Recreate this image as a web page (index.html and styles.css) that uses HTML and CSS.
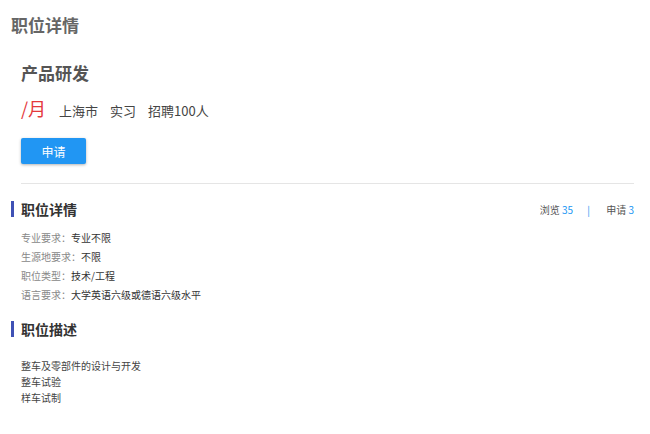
FILE: index.html
```html
<!DOCTYPE html>
<html lang="zh-CN">
<head>
    <meta charset="UTF-8">
    <title>职位详情</title>
    <link rel="stylesheet" href="styles.css">
</head>
<body>

<h1 class="page-title">职位详情</h1>

<div class="job-head">
    <h2 class="job-name">产品研发</h2>
    <div class="job-meta">
        <span class="salary">/月</span>
        <span>上海市</span>
        <span>实习</span>
        <span>招聘100人</span>
    </div>
    <button class="apply-btn">申请</button>
</div>

<div class="section">
    <div class="section-head">
        <h3 class="section-title">职位详情</h3>
        <div class="stats">
            浏览 <span class="num">35</span>
            <span class="sep">|</span>
            申请 <span class="num">3</span>
        </div>
    </div>
    <ul class="info-list">
        <li><span class="label">专业要求：</span>专业不限</li>
        <li><span class="label">生源地要求：</span>不限</li>
        <li><span class="label">职位类型：</span>技术/工程</li>
        <li><span class="label">语言要求：</span>大学英语六级或德语六级水平</li>
    </ul>
</div>

<div class="section">
    <div class="section-head">
        <h3 class="section-title">职位描述</h3>
    </div>
    <div class="desc">
        整车及零部件的设计与开发<br>
        整车试验<br>
        样车试制
    </div>
</div>

</body>
</html>
```

FILE: styles.css
```css
body, html {
    margin: 0;
    background-color: #fff;
    font-family: "Noto Sans CJK SC", "Microsoft YaHei", sans-serif;
    color: #333;
}

body {
    padding: 0 16px 0 11px;
}

.page-title {
    margin: 0;
    padding-top: 12px;
    font-size: 17px;
    line-height: 26px;
    color: #666;
    font-weight: bold;
}

.job-head {
    margin: 0 0 0 10px;
    padding: 23px 0 19px;
    border-bottom: 1px solid #e5e5e5;
}

.job-name {
    margin: 0;
    font-size: 17px;
    line-height: 24px;
    color: #555;
    font-weight: bold;
}

.job-meta {
    display: flex;
    align-items: baseline;
    gap: 12px;
    margin-top: 11px;
    font-size: 13px;
    line-height: 24px;
    color: #444;
}

.salary {
    font-size: 18px;
    color: #e4393c;
    margin-right: 1px;
}

.apply-btn {
    margin-top: 15px;
    width: 65px;
    height: 26px;
    border: none;
    border-radius: 2px;
    background-color: #2196f3;
    color: #fff;
    font-family: inherit;
    font-size: 12px;
    box-shadow: 0 1px 3px rgba(0, 0, 0, 0.3);
    cursor: pointer;
}

.section {
    margin-top: 17px;
}

.section-head {
    display: flex;
    align-items: center;
    justify-content: space-between;
}

.section-title {
    margin: 0;
    padding-left: 7px;
    border-left: 3px solid #3f51b5;
    font-size: 14px;
    line-height: 16px;
    font-weight: bold;
    color: #333;
}

.stats {
    font-size: 10px;
    color: #555;
}

.stats .num {
    color: #2196f3;
}

.stats .sep {
    color: #2196f3;
    margin: 0 14px 0 12px;
}

.info-list {
    list-style: none;
    margin: 11px 0 0 10px;
    padding: 0;
    font-size: 10px;
    line-height: 19px;
    color: #333;
}

.label {
    color: #888;
}

.desc {
    margin: 21px 0 0 10px;
    font-size: 10px;
    line-height: 16px;
    color: #444;
}
```
